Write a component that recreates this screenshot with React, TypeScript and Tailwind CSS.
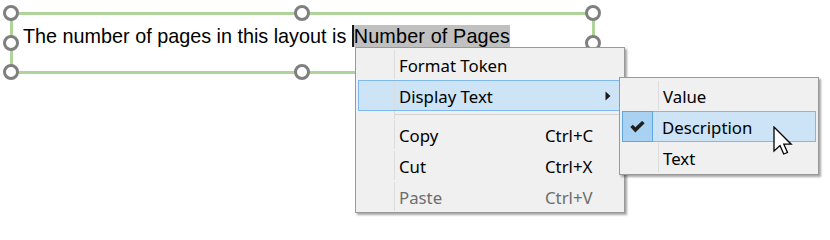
import React from 'react';

// selection handle centers, relative to the 585x62 frame box
const handles = [
  'left-[-7px] top-[-7px]',
  'left-[284px] top-[-7px]',
  'left-[575px] top-[-7px]',
  'left-[-7px] top-[23px]',
  'left-[575px] top-[23px]',
  'left-[-7px] top-[52px]',
  'left-[284px] top-[52px]',
  'left-[575px] top-[52px]',
];

const menuFont = { fontFamily: '"Noto Sans", "Open Sans", sans-serif' };

const Gutter = () => <div className="w-px self-stretch bg-[#dcdcdc]" />;

type RowProps = {
  label: string;
  shortcut?: string;
  hot?: boolean;
  disabled?: boolean;
  submenu?: boolean;
};

const MenuRow = ({ label, shortcut, hot, disabled, submenu }: RowProps) => (
  <div
    className={`mx-[2px] flex h-[31px] items-center border ${
      hot ? 'border-[#7fb8ea] bg-[#cde3f6]' : 'border-transparent'
    }`}
  >
    <div className="w-[30px] shrink-0" />
    <div className="ml-[5px] flex h-full flex-1 items-center">
      <Gutter />
      <span
        className={`w-[150px] pl-[4px] pt-[3px] text-[16.8px] ${disabled ? 'text-[#6d6d6d]' : 'text-black'}`}
      >
        {label}
      </span>
      {shortcut && (
        <span className={`pt-[3px] text-[16.8px] ${disabled ? 'text-[#6d6d6d]' : 'text-black'}`}>{shortcut}</span>
      )}
      {submenu && (
        <svg className="ml-auto mr-[10px]" width="6" height="10" viewBox="0 0 6 10">
          <path d="M0.5 0.5 L5.5 5 L0.5 9.5 Z" fill="#1a1a1a" />
        </svg>
      )}
    </div>
  </div>
);

const Separator = () => (
  <div className="mx-[2px] flex h-[8px]">
    <div className="w-[36px] shrink-0" />
    <Gutter />
    <div className="flex-1 pt-[3px]">
      <div className="h-px w-full bg-[#d4d4d4]" />
    </div>
  </div>
);

const SubRow = ({ label, checked }: { label: string; checked?: boolean }) =>
  checked ? (
    <div className="mx-[2px] flex h-[31px]">
      <div className="flex w-[31px] shrink-0 items-center justify-center border border-[#5ea6e4] bg-[#a9d1f1]">
        <svg width="15" height="12" viewBox="0 0 14 11">
          <path d="M0.3 5.6 L2.6 3.4 L5 5.8 L11.3 -0.2 L13.7 2.1 L5 10.7 Z" fill="#1e1e1e" />
        </svg>
      </div>
      <div className="flex flex-1 items-center border-y border-r border-[#7fb8ea] bg-[#cde3f6] pl-[4px]">
        <Gutter />
        <span className="pl-[4px] pt-[3px] text-[16.8px] text-black">{label}</span>
      </div>
    </div>
  ) : (
    <div className="mx-[2px] flex h-[31px] items-center border border-transparent">
      <div className="w-[30px] shrink-0" />
      <div className="ml-[5px] flex h-full flex-1 items-center">
        <Gutter />
        <span className="pl-[4px] pt-[3px] text-[16.8px] text-black">{label}</span>
      </div>
    </div>
  );

export default function App() {
  return (
    <div className="relative h-[222px] w-[830px] overflow-hidden bg-white">
      {/* text frame on the layout canvas */}
      <div className="relative ml-[10px] mt-[12px] h-[62px] w-[585px]">
        <div
          className="h-full w-full border-[3px] border-[#aed49a] pl-[10px] pt-[10px] text-[19.8px] leading-[23px] text-black"
          style={{ fontFamily: '"Liberation Sans", Arial, sans-serif' }}
        >
          The number of pages in this layout is{' '}
          <span className="border-l-2 border-[#1a1a1a] bg-[#c0c0c0] tracking-[0.15px]">Number of Pages</span>
        </div>
        {handles.map((pos, i) => (
          <div
            key={i}
            className={`absolute ${pos} h-[16px] w-[16px] rounded-full border-[3px] border-[#7f7f7f] bg-white`}
          />
        ))}
      </div>

      {/* context menu */}
      <div
        className="absolute left-[355px] top-[47px] w-[270px] border border-[#999999] bg-[#f0f0f0] pt-[1px] shadow-[2px_2px_2px_rgba(0,0,0,0.35)]"
        style={menuFont}
      >
        <MenuRow label="Format Token" />
        <MenuRow label="Display Text" hot submenu />
        <Separator />
        <MenuRow label="Copy" shortcut="Ctrl+C" />
        <MenuRow label="Cut" shortcut="Ctrl+X" />
        <MenuRow label="Paste" shortcut="Ctrl+V" disabled />
      </div>

      {/* submenu */}
      <div
        className="absolute left-[619px] top-[77px] w-[200px] border border-[#999999] bg-[#f0f0f0] pb-[1px] pt-[2px] shadow-[2px_2px_2px_rgba(0,0,0,0.35)]"
        style={menuFont}
      >
        <SubRow label="Value" />
        <SubRow label="Description" checked />
        <SubRow label="Text" />
      </div>

      {/* mouse pointer */}
      <svg className="absolute left-[773px] top-[126px]" width="20" height="30" viewBox="0 0 20 30">
        <path
          d="M1 1 L1 25 L7 19.5 L10.7 28 L14.5 26.5 L10.8 18.2 L18.2 18.2 Z"
          fill="white"
          stroke="black"
          strokeWidth="1.3"
          strokeLinejoin="miter"
        />
      </svg>
    </div>
  );
}
